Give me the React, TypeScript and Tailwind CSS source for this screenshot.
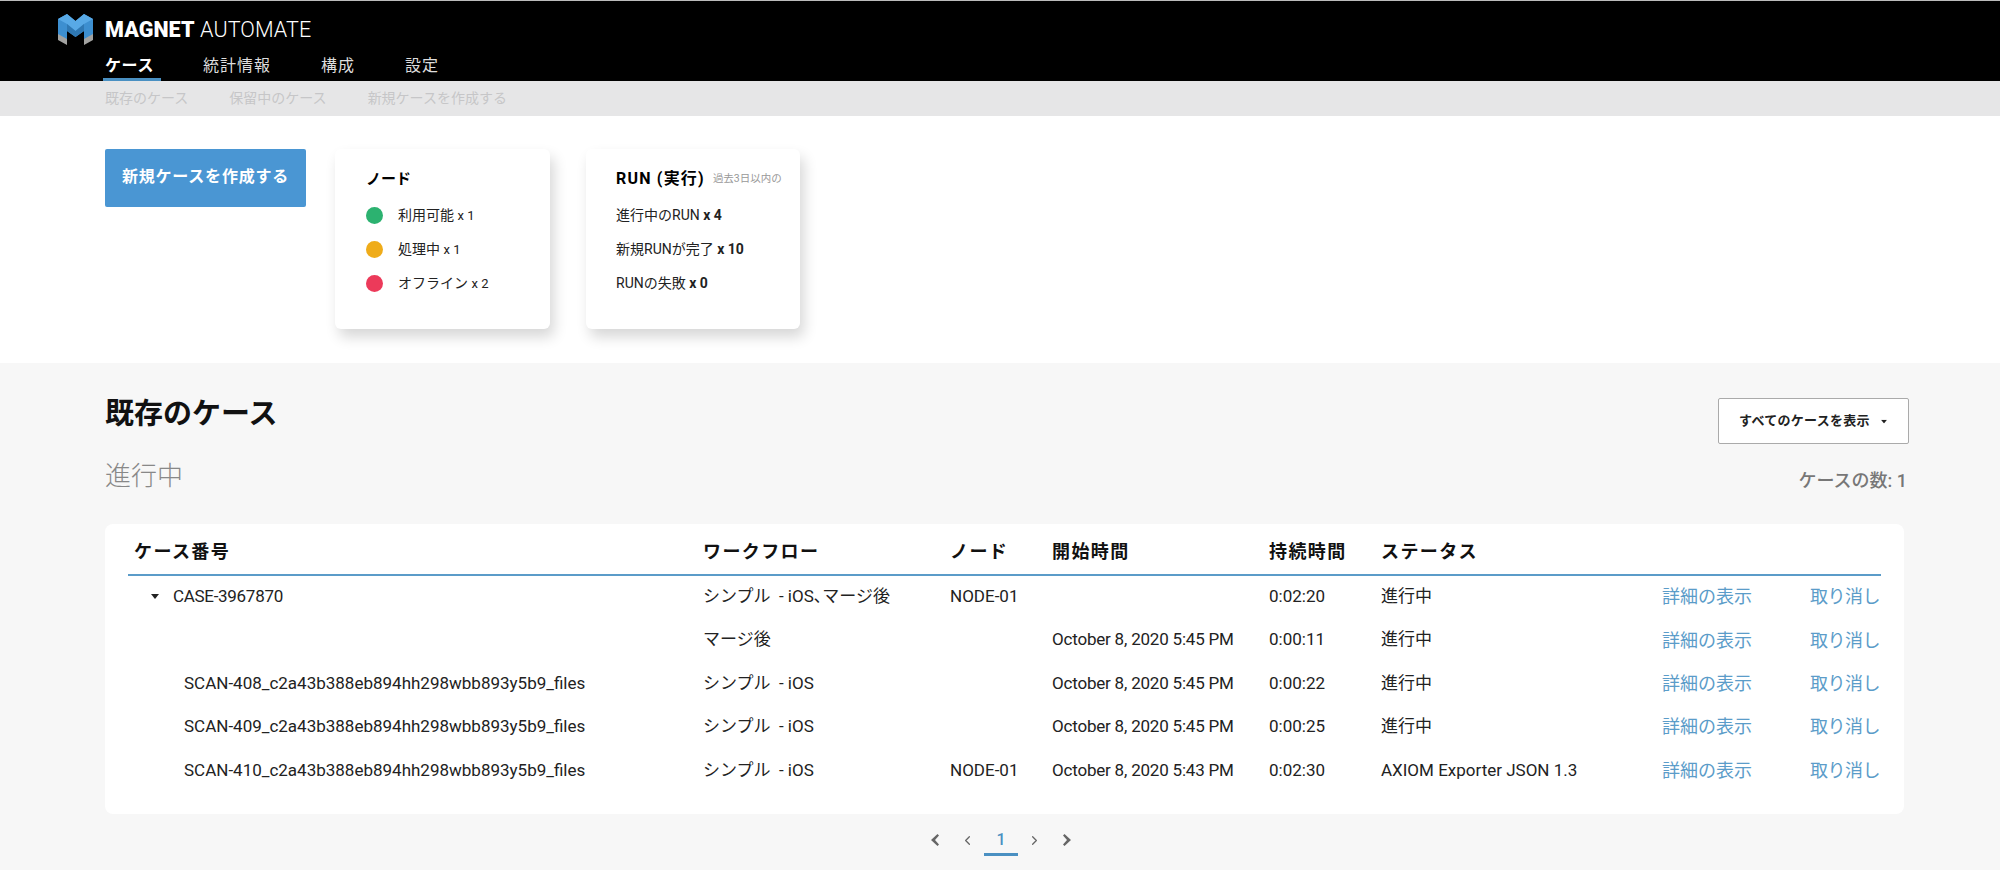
import type { ReactNode } from "react";
import { ChevronLeft, ChevronRight } from "lucide-react";

const FONT = "font-['Roboto','Noto_Sans_CJK_JP',sans-serif]";

const rows: { name: string; expand?: boolean; workflow: ReactNode; node: string; start: string; duration: string; status: string }[] = [
  {
    name: "CASE-3967870",
    expand: true,
    workflow: (
      <>
        シンプル  - iOS<span className="[font-feature-settings:'palt']">、</span>マージ後
      </>
    ),
    node: "NODE-01",
    start: "",
    duration: "0:02:20",
    status: "進行中",
  },
  { name: "", workflow: "マージ後", node: "", start: "October 8, 2020 5:45 PM", duration: "0:00:11", status: "進行中" },
  { name: "SCAN-408_c2a43b388eb894hh298wbb893y5b9_files", workflow: "シンプル  - iOS", node: "", start: "October 8, 2020 5:45 PM", duration: "0:00:22", status: "進行中" },
  { name: "SCAN-409_c2a43b388eb894hh298wbb893y5b9_files", workflow: "シンプル  - iOS", node: "", start: "October 8, 2020 5:45 PM", duration: "0:00:25", status: "進行中" },
  { name: "SCAN-410_c2a43b388eb894hh298wbb893y5b9_files", workflow: "シンプル  - iOS", node: "NODE-01", start: "October 8, 2020 5:43 PM", duration: "0:02:30", status: "AXIOM Exporter JSON 1.3" },
];

const COLS = "grid grid-cols-[569px_247px_102px_217px_112px_281px_148px_1fr]";

function Logo() {
  return (
    <svg width="35" height="31" viewBox="0 0 35 31" className="shrink-0">
      <path d="M0 5 L9 0 L17.5 7 L26 0 L35 5 L35 25 L26 30 L26 17 L17.5 23 L9 17 L9 30 L0 25 Z" fill="#3d8fd0" />
      <path d="M0 5 L9 0 L17.5 7 L26 0 L35 5 L26 10 L17.5 17 L9 10 Z" fill="#58a9e6" />
      <path d="M9 10 L17.5 17 L17.5 23 L9 17 Z M26 10 L17.5 17 L17.5 23 L26 17 Z" fill="#2f78b3" />
      <path d="M0 20 L9 25 L9 31 L0 26 Z M26 25 L35 20 L35 26 L26 31 Z" fill="#a3a3a1" />
    </svg>
  );
}

function Caret({ className = "" }: { className?: string }) {
  return (
    <svg width="8" height="5" viewBox="0 0 8 5" className={className}>
      <path d="M0 0 H8 L4 5 Z" fill="#222" />
    </svg>
  );
}

function SolidChevron({ flip }: { flip?: boolean }) {
  return (
    <svg width="9" height="12" viewBox="0 0 9 12" className={flip ? "rotate-180" : ""}>
      <path d="M7.5 0 L9 1.5 L5 6 L9 10.5 L7.5 12 L1 6 Z" fill="#666" />
    </svg>
  );
}

export default function App() {
  return (
    <div className={`${FONT} flex h-[870px] w-[2000px] flex-col overflow-hidden bg-white text-[#222]`}>
      {/* Header */}
      <header className="h-[81px] border-t border-[#bbb] bg-black pl-[58px] text-white">
        <div className="flex h-[45px] items-center gap-[12px] pt-[12px]">
          <Logo />
          <div className="text-[21.5px] leading-none tracking-[0.1px]">
            <span className="font-black">MAGNET</span> <span className="font-light">AUTOMATE</span>
          </div>
        </div>
        <nav className="flex h-[35px] pl-[45px] text-[16px]">
          <div className="w-[100px]">
            <span className="inline-block h-[35px] w-[58px] border-b-[3px] border-[#4a90c2] pl-[2px] pt-[8px] font-bold tracking-[0.6px]">ケース</span>
          </div>
          <span className="w-[118px] pt-[8px] tracking-[1px] text-[#ddd]">統計情報</span>
          <span className="w-[84px] pt-[8px] tracking-[1px] text-[#ddd]">構成</span>
          <span className="pt-[8px] tracking-[1px] text-[#ddd]">設定</span>
        </nav>
      </header>

      {/* Sub navigation */}
      <div className="flex h-[35px] items-center gap-[41px] bg-[#e6e6e7] pl-[105px] text-[14px] text-[#c6c6c8]">
        <span>既存のケース</span>
        <span>保留中のケース</span>
        <span>新規ケースを作成する</span>
      </div>

      {/* Summary */}
      <section className="flex h-[247px] items-start pl-[105px] pt-[33px]">
        <button className="h-[58px] w-[201px] rounded-[2px] bg-[#4a96d3] pb-[3px] text-[16px] font-bold tracking-[0.8px] text-white">
          新規ケースを作成する
        </button>
        <div className="ml-[29px] h-[180px] w-[215px] rounded-[6px] bg-white pl-[31px] pt-[19px] shadow-[4px_8px_14px_rgba(0,0,0,0.16)]">
          <h3 className="text-[15px] font-bold leading-[22px] text-black">ノード</h3>
          <ul className="mt-[15px] space-y-[13px] text-[14px]">
            <li className="flex h-[21px] items-center gap-[15px]">
              <span className="h-[17px] w-[17px] rounded-full bg-[#2cb270]" />
              <span>利用可能 <span className="text-[13px]">x 1</span></span>
            </li>
            <li className="flex h-[21px] items-center gap-[15px]">
              <span className="h-[17px] w-[17px] rounded-full bg-[#efac1a]" />
              <span>処理中 <span className="text-[13px]">x 1</span></span>
            </li>
            <li className="flex h-[21px] items-center gap-[15px]">
              <span className="h-[17px] w-[17px] rounded-full bg-[#ec3a5a]" />
              <span>オフライン <span className="text-[13px]">x 2</span></span>
            </li>
          </ul>
        </div>
        <div className="ml-[36px] h-[180px] w-[214px] rounded-[6px] bg-white pl-[30px] pt-[19px] shadow-[4px_8px_14px_rgba(0,0,0,0.16)]">
          <h3 className="flex items-center text-[16px] font-bold leading-[22px] tracking-[1.2px] text-black">
            RUN (実行)
            <span className="ml-[8px] text-[10.5px] font-normal tracking-normal text-[#999]">過去3日以内の</span>
          </h3>
          <ul className="mt-[15px] space-y-[13px] text-[14px]">
            <li className="h-[21px]">進行中のRUN <b>x 4</b></li>
            <li className="h-[21px]">新規RUNが完了 <b>x 10</b></li>
            <li className="h-[21px]">RUNの失敗 <b>x 0</b></li>
          </ul>
        </div>
      </section>

      {/* Existing cases */}
      <main className="flex-1 bg-[#f7f7f7] pl-[105px] pr-[91px] pt-[35px]">
        <div className="flex h-[46px] items-start justify-between">
          <h1 className="pt-[2px] text-[29px] font-bold leading-[28px] text-[#111]">既存のケース</h1>
          <button className="flex h-[46px] w-[191px] items-center rounded-[2px] border border-[#aaa] bg-white pl-[20px] text-[13px] font-bold tracking-[0.3px]">
            すべてのケースを表示
            <Caret className="ml-[10px] scale-75" />
          </button>
        </div>
        <div className="mt-[16px] flex h-[33px] items-center justify-between">
          <h2 className="text-[26px] font-light text-[#888]">進行中</h2>
          <span className="pr-[2px] pt-[7px] text-[18px] font-medium text-[#777]">ケースの数: 1</span>
        </div>

        <div className="mr-[5px] mt-[31px] h-[290px] rounded-[8px] bg-white px-[23px]">
          <div className={`${COLS} mb-[-1px] h-[52px] items-center border-b-2 border-[#5b9cc9] pl-[6px] pt-[4px] text-[18px] font-bold tracking-[1.4px] text-[#111]`}>
            <span>ケース番号</span>
            <span>ワークフロー</span>
            <span>ノード</span>
            <span>開始時間</span>
            <span>持続時間</span>
            <span>ステータス</span>
          </div>
          {rows.map((row, i) => (
            <div key={i} className={`${COLS} h-[43.4px] items-center whitespace-pre pl-[6px] text-[17px]`}>
              <div className={`flex items-center ${row.expand ? "pl-[17px]" : "pl-[50px]"}`}>
                {row.expand && <Caret className="mr-[14px]" />}
                <span className={row.expand ? "tracking-[-0.3px]" : ""}>{row.name}</span>
              </div>
              <span>{row.workflow}</span>
              <span>{row.node}</span>
              <span className="tracking-[-0.2px]">{row.start}</span>
              <span>{row.duration}</span>
              <span>{row.status}</span>
              <span className="text-[18px] text-[#5b9cc9]">詳細の表示</span>
              <span className="text-[18px] tracking-[-0.5px] text-[#5b9cc9]">取り消し</span>
            </div>
          ))}
        </div>

        {/* Pagination */}
        <div className="mr-[12px] mt-[10px] flex h-[32px] items-center justify-center text-[#666]">
          <span className="flex w-[33px] justify-center"><SolidChevron /></span>
          <span className="flex w-[33px] justify-center"><ChevronLeft size={15} strokeWidth={2} /></span>
          <span className="h-[32px] w-[34px] border-b-[3px] border-[#4a90c2] pt-[3px] text-center text-[16px] font-medium leading-[26px] text-[#4a90c2]">1</span>
          <span className="flex w-[33px] justify-center"><ChevronRight size={15} strokeWidth={2} /></span>
          <span className="flex w-[33px] justify-center"><SolidChevron flip /></span>
        </div>
      </main>
    </div>
  );
}
